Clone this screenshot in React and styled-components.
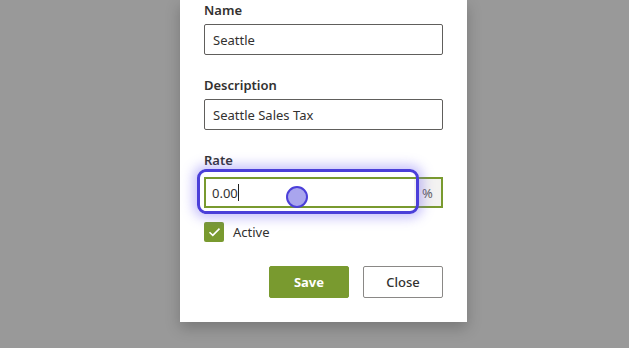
import React, { useState } from 'react';
import styled, { createGlobalStyle } from 'styled-components';

const GlobalStyle = createGlobalStyle`
  html, body {
    margin: 0;
    padding: 0;
    background: #999999;
    font-family: "Noto Sans", "Open Sans", sans-serif;
    color: #323130;
  }
`;

const Backdrop = styled.div`
  width: 629px;
  height: 348px;
  overflow: hidden;
  display: flex;
  align-items: flex-start;
  padding-left: 180px;
  box-sizing: border-box;
`;

const Dialog = styled.div`
  width: 287px;
  background: #fff;
  box-sizing: border-box;
  padding: 0 24px 24px;
  box-shadow: 0 6px 14px rgba(0, 0, 0, 0.22);
`;

const Field = styled.div`
  margin-bottom: ${p => p.$gap ?? 20}px;
`;

const Label = styled.label`
  display: block;
  font-size: 13px;
  font-weight: 600;
  line-height: 20px;
  margin-bottom: ${p => p.$gap || 4}px;
  color: #323130;
`;

const TextInput = styled.input`
  display: block;
  width: 100%;
  height: 31px;
  box-sizing: border-box;
  border: 1px solid #605e5c;
  border-radius: 2px;
  padding: 0 8px;
  font: inherit;
  font-size: 13px;
  color: #323130;
  outline: none;
`;

const Group = styled.div`
  position: relative;
  display: flex;
  height: 31px;
  box-sizing: border-box;
  border: 2px solid #799a2f;
`;

const GroupInput = styled.div`
  flex: 1;
  display: flex;
  align-items: center;
  padding: 0 6px;
  font-size: 13px;
  color: #323130;
`;

const Caret = styled.span`
  display: inline-block;
  width: 1px;
  height: 17px;
  background: #201f1e;
`;

const Addon = styled.div`
  width: 27px;
  display: flex;
  align-items: center;
  justify-content: center;
  background: #f3f2f1;
  color: #605e5c;
  font-size: 13px;
`;

// keyboard focus ring drawn over the rate field
const FocusRing = styled.div`
  position: absolute;
  left: -9px;
  top: -10px;
  width: 222px;
  height: 45px;
  box-sizing: border-box;
  border: 3px solid #4b3fd9;
  border-radius: 9px;
  box-shadow: 0 0 12px 4px rgba(115, 100, 245, 0.4);
  pointer-events: none;
`;

const Pointer = styled.div`
  position: absolute;
  left: 86px;
  top: 14px;
  width: 22px;
  height: 22px;
  box-sizing: border-box;
  border-radius: 50%;
  border: 2.5px solid #4b3fd9;
  background: #a9a5ee;
  pointer-events: none;
`;

const CheckRow = styled.label`
  display: flex;
  align-items: center;
  gap: 9px;
  margin: 14px 0 24px;
  font-size: 13px;
  color: #323130;
`;

const Box = styled.span`
  width: 20px;
  height: 20px;
  border-radius: 2px;
  background: ${p => (p.$checked ? '#799a2f' : '#fff')};
  display: flex;
  align-items: center;
  justify-content: center;
`;

const Actions = styled.div`
  display: flex;
  justify-content: flex-end;
  gap: 14px;
`;

const Button = styled.button`
  width: 80px;
  height: 32px;
  box-sizing: border-box;
  border-radius: 2px;
  font: inherit;
  font-size: 13px;
  font-weight: ${p => (p.$primary ? 700 : 500)};
  border: 1px solid ${p => (p.$primary ? '#799a2f' : '#8a8886')};
  background: ${p => (p.$primary ? '#799a2f' : '#fff')};
  color: ${p => (p.$primary ? '#fff' : '#323130')};
  padding: 0;
`;

export default function App() {
  const [active] = useState(true);
  return (
    <>
      <GlobalStyle />
      <Backdrop>
        <Dialog>
          <Field>
            <Label>Name</Label>
            <TextInput defaultValue="Seattle" />
          </Field>
          <Field>
            <Label>Description</Label>
            <TextInput defaultValue="Seattle Sales Tax" />
          </Field>
          <Field $gap={0}>
            <Label $gap={7}>Rate</Label>
            <Group>
              <GroupInput>
                0.00<Caret />
              </GroupInput>
              <Addon>%</Addon>
              <FocusRing>
                <Pointer />
              </FocusRing>
            </Group>
          </Field>
          <CheckRow>
            <Box $checked={active}>
              <svg width="13" height="10" viewBox="0 0 13 10">
                <path d="M1.5 5.2 L4.8 8.4 L11.5 1.6" fill="none" stroke="#fff" strokeWidth="1.6" />
              </svg>
            </Box>
            Active
          </CheckRow>
          <Actions>
            <Button $primary>Save</Button>
            <Button>Close</Button>
          </Actions>
        </Dialog>
      </Backdrop>
    </>
  );
}
